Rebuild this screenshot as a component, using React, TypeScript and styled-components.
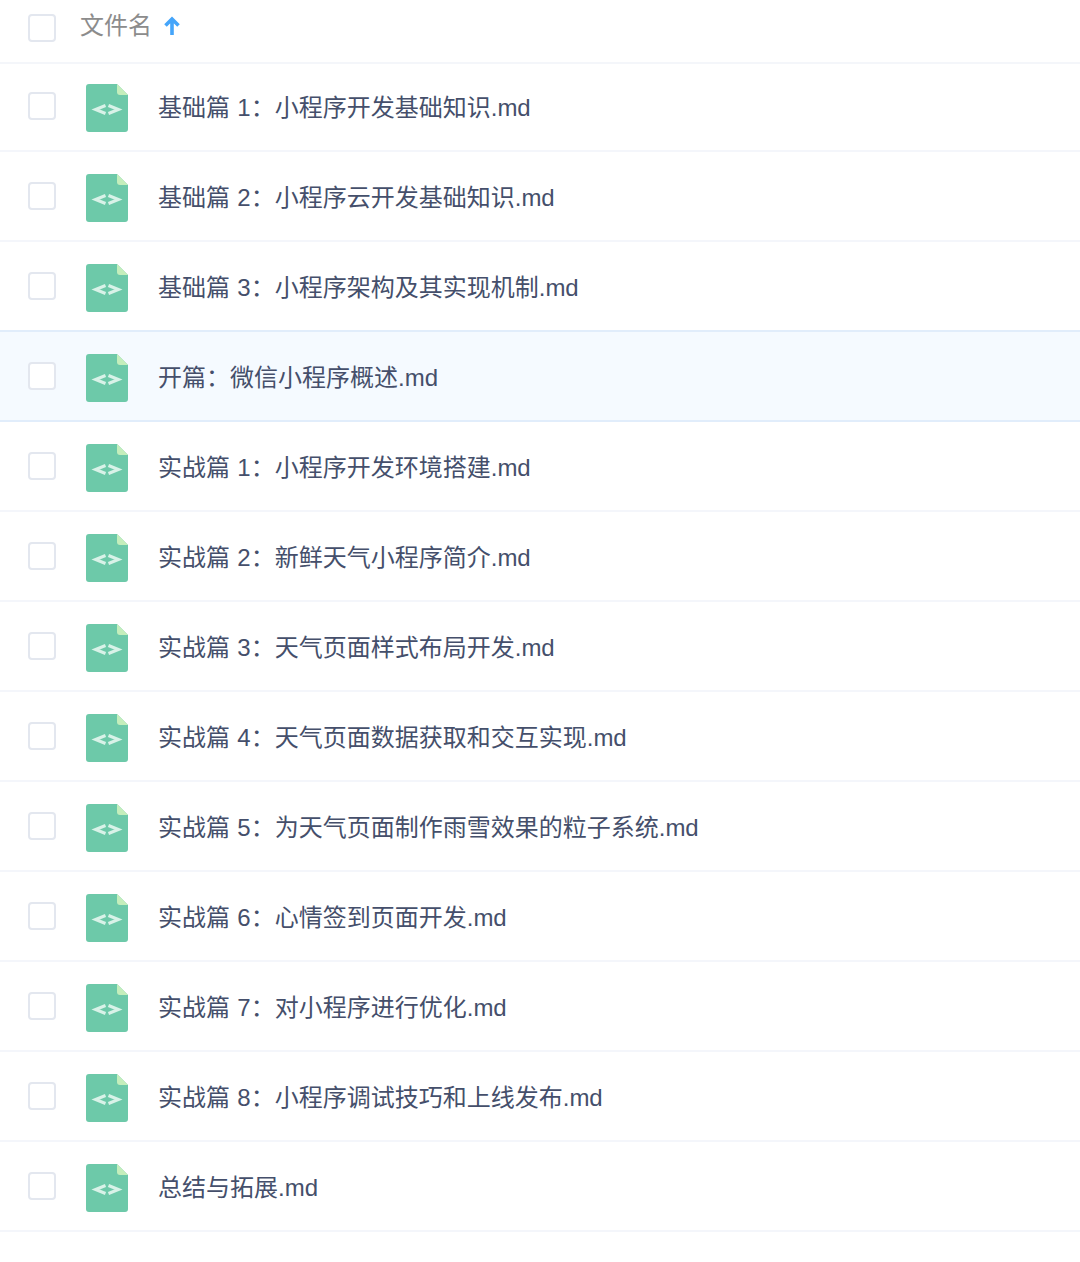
import React from "react";
import styled, { createGlobalStyle } from "styled-components";

const Global = createGlobalStyle`
  html, body { margin: 0; padding: 0; background: #fff; }
  body { font-family: "Liberation Sans", "Noto Sans CJK SC", sans-serif; }
`;

const Page = styled.div`
  width: 1080px;
  height: 1262px;
  overflow: hidden;
  background: #fff;
`;

const Header = styled.div`
  display: flex;
  align-items: center;
  height: 62px;
  padding: 0 0 6px 28px;
  box-sizing: border-box;
  box-shadow: 0 2px 0 #f4f6fa;
`;

const Check = styled.span`
  flex: none;
  width: 28px;
  height: 28px;
  box-sizing: border-box;
  border: 2px solid #e3e7ef;
  border-radius: 4px;
  background: #fff;
`;

const HeaderLabel = styled.span`
  margin: 0 0 4px 24px;
  font-size: 24px;
  line-height: 32px;
  color: #8c8c8c;
`;

const SortArrow = styled.svg`
  margin: 0 0 4px 11px;
  width: 18px;
  height: 20px;
`;

const Row = styled.div<{ $active?: boolean }>`
  display: flex;
  align-items: center;
  height: 90px;
  padding-left: 28px;
  box-sizing: border-box;
  border-bottom: 2px solid ${(p) => (p.$active ? "#e1edfb" : "#f4f6fb")};
  background: ${(p) => (p.$active ? "#f5faff" : "transparent")};
  box-shadow: ${(p) => (p.$active ? "0 -2px 0 #e1edfb" : "none")};
`;

const FileIcon = styled.svg`
  flex: none;
  margin: 4px 0 0 30px;
  width: 42px;
  height: 48px;
`;

const Name = styled.span`
  margin: 4px 0 0 30px;
  font-size: 24px;
  line-height: 32px;
  word-spacing: 0.7px;
  color: #454f6b;
  white-space: pre;
`;

const files = [
  "基础篇 1：小程序开发基础知识.md",
  "基础篇 2：小程序云开发基础知识.md",
  "基础篇 3：小程序架构及其实现机制.md",
  "开篇：微信小程序概述.md",
  "实战篇 1：小程序开发环境搭建.md",
  "实战篇 2：新鲜天气小程序简介.md",
  "实战篇 3：天气页面样式布局开发.md",
  "实战篇 4：天气页面数据获取和交互实现.md",
  "实战篇 5：为天气页面制作雨雪效果的粒子系统.md",
  "实战篇 6：心情签到页面开发.md",
  "实战篇 7：对小程序进行优化.md",
  "实战篇 8：小程序调试技巧和上线发布.md",
  "总结与拓展.md",
];

const CodeFile = () => (
  <FileIcon viewBox="0 0 42 48">
    <path d="M3 0H31L42 11V45a3 3 0 0 1-3 3H3a3 3 0 0 1-3-3V3a3 3 0 0 1 3-3Z" fill="#6dc9a9" />
    <path d="M31 0L42 11H34a3 3 0 0 1-3-3Z" fill="#c4eebb" />
    <path d="M19.5 21.5L9.5 25.5l10 4M22.5 21.5L32.5 25.5l-10 4" fill="none" stroke="#d9f2e8" strokeWidth="3" />
  </FileIcon>
);

export default function App() {
  return (
    <Page>
      <Global />
      <Header>
        <Check />
        <HeaderLabel>文件名</HeaderLabel>
        <SortArrow viewBox="0 0 18 20">
          <path d="M9 19V3M2.5 9.5L9 3l6.5 6.5" fill="none" stroke="#45a5fa" strokeWidth="3.6" />
        </SortArrow>
      </Header>
      {files.map((f, i) => (
        <Row key={f} $active={i === 3}>
          <Check />
          <CodeFile />
          <Name>{f}</Name>
        </Row>
      ))}
    </Page>
  );
}
